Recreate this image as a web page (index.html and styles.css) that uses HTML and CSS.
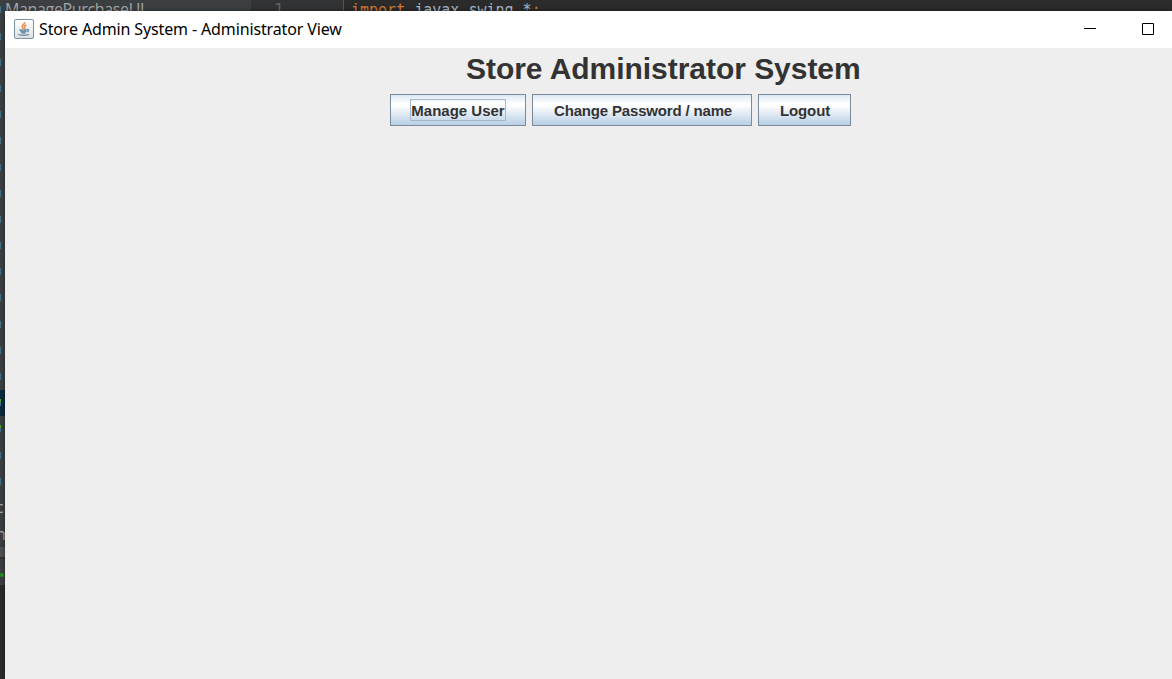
FILE: index.html
```html
<!DOCTYPE html>
<html lang="en">
<head>
<meta charset="utf-8">
<title>Store Admin System - Administrator View</title>
<link rel="stylesheet" href="styles.css">
</head>
<body>
<div class="desktop">
  <div class="ide">
    <div class="tree">
      <div class="row"><i class="dot"></i><span>ManagePurchaseUI</span></div>
      <div class="row"><i class="dot"></i></div><div class="row"><i class="dot"></i></div>
      <div class="row"><i class="dot"></i></div><div class="row"><i class="dot"></i></div>
      <div class="row"><i class="dot"></i></div><div class="row"><i class="dot"></i></div>
      <div class="row"><i class="dot"></i></div><div class="row"><i class="dot"></i></div>
      <div class="row"><i class="dot"></i></div><div class="row"><i class="dot"></i></div>
      <div class="row"><i class="dot"></i></div><div class="row"><i class="dot"></i></div>
      <div class="row"><i class="dot"></i></div><div class="row"><i class="dot"></i></div>
      <div class="row selected"><i class="dot run"></i></div>
      <div class="row"><i class="dot run"></i></div>
      <div class="row"><i class="dot"></i></div><div class="row"><i class="dot"></i></div>
      <div class="row"><span class="cut">c</span></div>
      <div class="row"><span class="cut">n</span></div>
      <div class="toolbar"></div>
      <div class="tab"><i class="status"></i></div>
      <div class="console"></div>
    </div>
    <div class="gutter">1</div>
    <div class="code"><span class="keyword">import</span> javax.swing.*<span class="keyword">;</span></div>
  </div>
  <div class="window">
    <div class="titlebar">
      <svg class="java" width="20" height="20" viewBox="0 0 20 20">
        <defs><linearGradient id="face" x1="0" y1="0" x2="0" y2="1"><stop offset="0" stop-color="#fff"/><stop offset="1" stop-color="#dcdfe2"/></linearGradient></defs>
        <rect x=".5" y=".5" width="19" height="19" rx="1.5" fill="url(#face)" stroke="#7b92a3"/>
        <path d="M10.6 3C11.4 5 7.8 6 8.2 7.8C8.4 8.8 9.5 9.3 9.6 10.2M12.4 6C10.6 6.6 10 7.4 10.7 8.4C11.1 9 11 9.6 10.5 10" fill="none" stroke="#e8904c" stroke-width="1.5"/>
        <path d="M5.4 10.7Q9 11.6 13 10.7M6.2 12.2Q9 13 12.4 12.2M7 13.7Q9 14.4 11.6 13.7M13 10.6C15.5 10.2 15 12.5 12.8 13.1M4.4 15C4 16.6 13 16.8 15 15.2" fill="none" stroke="#6c92ac" stroke-width="1.4"/>
      </svg>
      <span class="caption">Store Admin System - Administrator View</span>
      <svg class="controls" width="70" height="12" viewBox="0 0 70 12"><path d="M0 5.5H12M58.5 .5H69.5V11.5H58.5Z" fill="none" stroke="#000"/></svg>
    </div>
    <div class="content">
      <h1>Store Administrator System</h1>
      <div class="buttons">
        <button class="manage"><span class="focus">Manage User</span></button>
        <button class="password">Change Password / name</button>
        <button class="logout">Logout</button>
      </div>
    </div>
  </div>
</div>
</body>
</html>
```
FILE: styles.css
```css
body { margin: 0; }
.desktop { position: relative; width: 1172px; height: 679px; overflow: hidden; background: #2b2b2b; }
.ide { display: flex; height: 679px; }
.tree { width: 251px; background: #3c3f41; color: #a5a7a8; font: 16px/26px "Open Sans", sans-serif; flex: none; }
.row { display: flex; align-items: center; height: 26.2px; }
.row:first-child { height: 23px; }
.row:first-child span { margin: -5px 0 0 4px; line-height: 20px; letter-spacing: -.35px; }
.dot { width: 1px; height: 7px; background: #3f7085; }
.row:first-child .dot { margin-top: -4px; }
.selected { background: #0d293e; }
.run { background: linear-gradient(#4da32d 3px, #3f7085 3px); }
.cut { margin-left: -4px; }
.toolbar { height: 2px; background: #4e5153; }
.tab { display: flex; align-items: flex-end; height: 36px; background: linear-gradient(#4e5153 8px, #323232 8px, #323232 10px, #3c3f41 10px); }
.status { width: 4px; height: 4px; border-radius: 50%; background: #169c16; margin-bottom: 8px; }
.console { height: 94px; background: #2b2b2b; }
.gutter { width: 93px; box-sizing: border-box; padding-left: 23px; background: #313335; color: #606366; border-right: 1px solid #555; font: 16px/20px "DejaVu Sans Mono", monospace; flex: none; }
.code { padding-left: 7px; font: 15px/21px "DejaVu Sans Mono", monospace; color: #a9b7c6; white-space: pre; }
.keyword { color: #cc7832; }
.window { position: absolute; left: 5px; top: 11px; width: 1167px; height: 668px; background: #eee; box-shadow: 0 0 4px rgba(0,0,0,.5); }
.titlebar { display: flex; align-items: center; height: 37px; box-sizing: border-box; padding: 0 18px 0 9px; background: #fff; }
.java { margin-right: 5px; margin-top: -2px; }
.caption { font: 16px/20px "Noto Sans", sans-serif; color: #000; letter-spacing: -.13px; margin-top: -2px; }
.controls { margin-left: auto; margin-top: -1px; }
.content { font-family: "Liberation Sans", Arial, sans-serif; color: #333; }
h1 { box-sizing: border-box; margin: 0; padding: 2px 0 0 461px; font-size: 30px; letter-spacing: -.04px; line-height: 37px; height: 46px; font-weight: bold; white-space: nowrap; }
.buttons { display: flex; gap: 6px; padding-left: 385px; }
button { box-sizing: border-box; height: 32px; padding: 2px 0 0; border: 1px solid #7a8a99; background: linear-gradient(#dde8f3 0, #fff 30%, #fff 34%, #b8cfe5 100%); color: #333; font: bold 15px/18px "Liberation Sans", Arial, sans-serif; white-space: nowrap; }
.manage { width: 136px; padding-top: 0; }
.password { width: 220px; letter-spacing: -.17px; padding-left: 2px; }
.logout { width: 93px; letter-spacing: -.1px; padding-left: 1px; }
.focus { display: inline-block; box-sizing: border-box; width: 96px; height: 22px; border: 1px solid #a3b8cc; line-height: 22px; }
```
